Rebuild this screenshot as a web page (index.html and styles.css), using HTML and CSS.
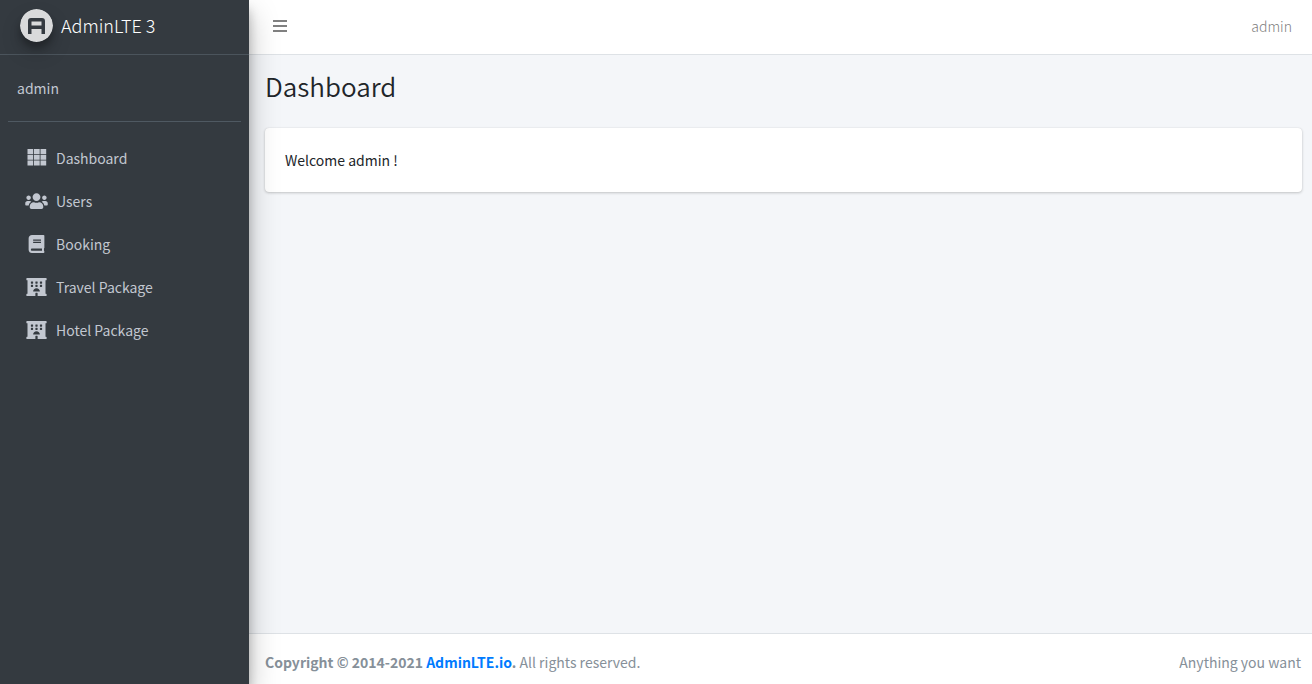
FILE: index.html
```html
<!DOCTYPE html>
<html lang="en">
<head>
<meta charset="utf-8">
<meta name="viewport" content="width=device-width, initial-scale=1">
<title>Dashboard</title>
<link rel="stylesheet" href="styles.css">
</head>
<body class="wrapper">
<svg class="sprite" aria-hidden="true">
  <symbol id="hotel" viewBox="0 0 576 512">
    <path fill-rule="evenodd" d="M560 64c8.800 0 16-7.200 16-16V16c0-8.800-7.200-16-16-16H16C7.200 0 0 7.200 0 16v32c0 8.800 7.200 16 16 16h16v384H16c-8.800 0-16 7.200-16 16v32c0 8.800 7.200 16 16 16h240v-80c0-8.800 7.200-16 16-16h32c8.800 0 16 7.200 16 16v80h240c8.800 0 16-7.200 16-16v-32c0-8.800-7.200-16-16-16h-16V64zM128 109q0-13 13-13h38q13 0 13 13v38q0 13-13 13h-38q-13 0-13-13zM256 109q0-13 13-13h38q13 0 13 13v38q0 13-13 13h-38q-13 0-13-13zM384 109q0-13 13-13h38q13 0 13 13v38q0 13-13 13h-38q-13 0-13-13zM128 205q0-13 13-13h38q13 0 13 13v38q0 13-13 13h-38q-13 0-13-13zM256 205q0-13 13-13h38q13 0 13 13v38q0 13-13 13h-38q-13 0-13-13zM384 205q0-13 13-13h38q13 0 13 13v38q0 13-13 13h-38q-13 0-13-13zM192 384c0-53 43-96 96-96s96 43 96 96z"/>
  </symbol>
</svg>
<aside class="sidebar">
  <a class="brand" href="#">
    <svg class="brand-logo" viewBox="0 0 33 33" aria-hidden="true">
      <circle cx="16.500" cy="16.500" r="16.500" fill="#d9dadb"/>
      <path fill="#343a40" fill-rule="evenodd" d="M8 25V12Q8 9 11 9h11Q25 9 25 12V25h-3.500v-5h-10V25zM11.500 12.500v4h10v-4z"/>
    </svg>
    <span>AdminLTE 3</span>
  </a>
  <div class="user-panel"><a class="user-name" href="#">admin</a></div>
  <nav class="menu">
    <a class="menu-item" href="#">
      <svg class="menu-icon" viewBox="0 0 23 18" aria-hidden="true"><path d="M2.500 0h5.700v5H2.500zM9 0h5.700v5H9zM15.500 0h5.700v5H15.500zM2.500 5.800h5.700v5H2.500zM9 5.800h5.700v5H9zM15.500 5.800h5.700v5H15.500zM2.500 11.600h5.700v5H2.500zM9 11.600h5.700v5H9zM15.500 11.600h5.700v5H15.500z"/></svg>
      <span>Dashboard</span>
    </a>
    <a class="menu-item" href="#">
      <svg class="menu-icon" viewBox="0 0 640 512" aria-hidden="true"><path d="M96 224c35.300 0 64-28.700 64-64s-28.700-64-64-64-64 28.700-64 64 28.700 64 64 64zm448 0c35.300 0 64-28.700 64-64s-28.700-64-64-64-64 28.700-64 64 28.700 64 64 64zm32 32h-64c-17.600 0-33.500 7.100-45.100 18.600 40.300 22.100 68.900 62 75.100 109.400h66c17.700 0 32-14.300 32-32v-32c0-35.300-28.700-64-64-64zm-256 0c61.900 0 112-50.100 112-112S381.900 32 320 32 208 82.100 208 144s50.100 112 112 112zm76.800 32h-8.300c-20.800 10-43.900 16-68.500 16s-47.600-6-68.500-16h-8.300C179.600 288 128 339.600 128 403.200V432c0 26.500 21.500 48 48 48h288c26.500 0 48-21.500 48-48v-28.800c0-63.600-51.600-115.200-115.200-115.200zm-223.700-13.400C161.500 263.100 145.600 256 128 256H64c-35.300 0-64 28.700-64 64v32c0 17.700 14.300 32 32 32h65.900c6.300-47.400 34.900-87.300 75.200-109.400z"/></svg>
      <span>Users</span>
    </a>
    <a class="menu-item" href="#">
      <svg class="menu-icon" viewBox="0 0 448 512" aria-hidden="true"><path d="M448 360V24c0-13.300-10.700-24-24-24H96C43 0 0 43 0 96v320c0 53 43 96 96 96h328c13.300 0 24-10.700 24-24v-16c0-7.500-3.500-14.300-8.900-18.700-4.200-15.400-4.200-59.300 0-74.700 5.400-4.300 8.900-11.100 8.900-18.600zM128 134c0-3.300 2.700-6 6-6h212c3.300 0 6 2.700 6 6v20c0 3.300-2.700 6-6 6H134c-3.300 0-6-2.700-6-6v-20zm0 64c0-3.300 2.700-6 6-6h212c3.300 0 6 2.700 6 6v20c0 3.300-2.700 6-6 6H134c-3.300 0-6-2.700-6-6v-20zm253.400 250H96c-17.700 0-32-14.300-32-32 0-17.600 14.400-32 32-32h285.400c-1.900 17.100-1.900 46.900 0 64z"/></svg>
      <span>Booking</span>
    </a>
    <a class="menu-item" href="#">
      <svg class="menu-icon" aria-hidden="true"><use href="#hotel"/></svg>
      <span>Travel Package</span>
    </a>
    <a class="menu-item" href="#">
      <svg class="menu-icon" aria-hidden="true"><use href="#hotel"/></svg>
      <span>Hotel Package</span>
    </a>
  </nav>
</aside>
<div class="page">
  <header class="navbar">
    <button class="toggle" type="button" aria-label="Toggle menu">
      <svg class="toggle-icon" viewBox="0 0 14 14" aria-hidden="true"><path d="M0 1h14v2H0zM0 6h14v2H0zM0 11h14v2H0z"/></svg>
    </button>
    <a class="account" href="#">admin</a>
  </header>
  <main class="content">
    <h1 class="title">Dashboard</h1>
    <section class="card">Welcome admin !</section>
  </main>
  <footer class="footer">
    <div><strong>Copyright © 2014-2021 <a class="footer-link" href="#">AdminLTE.io</a>.</strong> All rights reserved.</div>
    <div>Anything you want</div>
  </footer>
</div>
</body>
</html>
```
FILE: styles.css
```css
* {
  box-sizing: border-box;
}

.wrapper {
  display: flex;
  min-height: 100vh;
  margin: 0;
  background: #f4f6f9;
  color: #212529;
  font-family: "Source Sans Pro", "Noto Sans CJK SC", "Noto Sans", sans-serif;
  font-size: 14px;
  line-height: 24px;
}

a {
  color: inherit;
  text-decoration: none;
}

.sprite {
  position: absolute;
  width: 0;
  height: 0;
}

.sidebar {
  position: relative;
  z-index: 1;
  flex: 0 0 249px;
  background: #343a40;
  color: #c2c7d0;
  box-shadow: 0 14px 28px rgba(0, 0, 0, 0.25), 0 10px 10px rgba(0, 0, 0, 0.22);
}

.brand {
  display: flex;
  align-items: center;
  gap: 8px;
  height: 55px;
  padding: 0 20px 4px;
  border-bottom: 1px solid #4b545c;
  color: #fff;
  font-size: 18px;
  font-weight: 300;
}

.brand-logo {
  width: 33px;
  height: 33px;
  border-radius: 50%;
  box-shadow: 0 10px 20px rgba(0, 0, 0, 0.19), 0 6px 6px rgba(0, 0, 0, 0.23);
}

.user-panel {
  margin: 0 8px 16px;
  padding: 21px 9px;
  border-bottom: 1px solid #4f5962;
}

.user-name {
  display: block;
}

.menu {
  display: flex;
  flex-direction: column;
  gap: 3px;
  padding: 0 8px;
}

.menu-item {
  display: flex;
  align-items: center;
  gap: 8px;
  padding: 8px 17px;
}

.menu-icon {
  width: 23px;
  height: 18px;
  fill: currentColor;
}

.page {
  display: flex;
  flex: 1;
  flex-direction: column;
  min-width: 0;
}

.navbar {
  display: flex;
  align-items: center;
  justify-content: space-between;
  height: 55px;
  padding: 0 20px 2px 24px;
  border-bottom: 1px solid #dee2e6;
  background: #fff;
  color: #808080;
}

.account {
  font-weight: 300;
}

.toggle {
  display: flex;
  padding: 0;
  border: 0;
  background: none;
  color: inherit;
}

.toggle-icon {
  width: 14px;
  height: 14px;
  fill: currentColor;
}

.content {
  flex: 1;
  padding: 14px 10px 16px 16px;
}

.title {
  margin: 0 0 26px;
  font-size: 26px;
  font-weight: 350;
  line-height: 33px;
}

.card {
  padding: 20px;
  border-radius: 4px;
  background: #fff;
  box-shadow: 0 0 1px rgba(0, 0, 0, 0.13), 0 1px 3px rgba(0, 0, 0, 0.2);
}

.footer {
  display: flex;
  justify-content: space-between;
  padding: 16px 11px 10px 16px;
  border-top: 1px solid #dee2e6;
  background: #fff;
  color: #869099;
}

.footer-link {
  color: #007bff;
}
```
